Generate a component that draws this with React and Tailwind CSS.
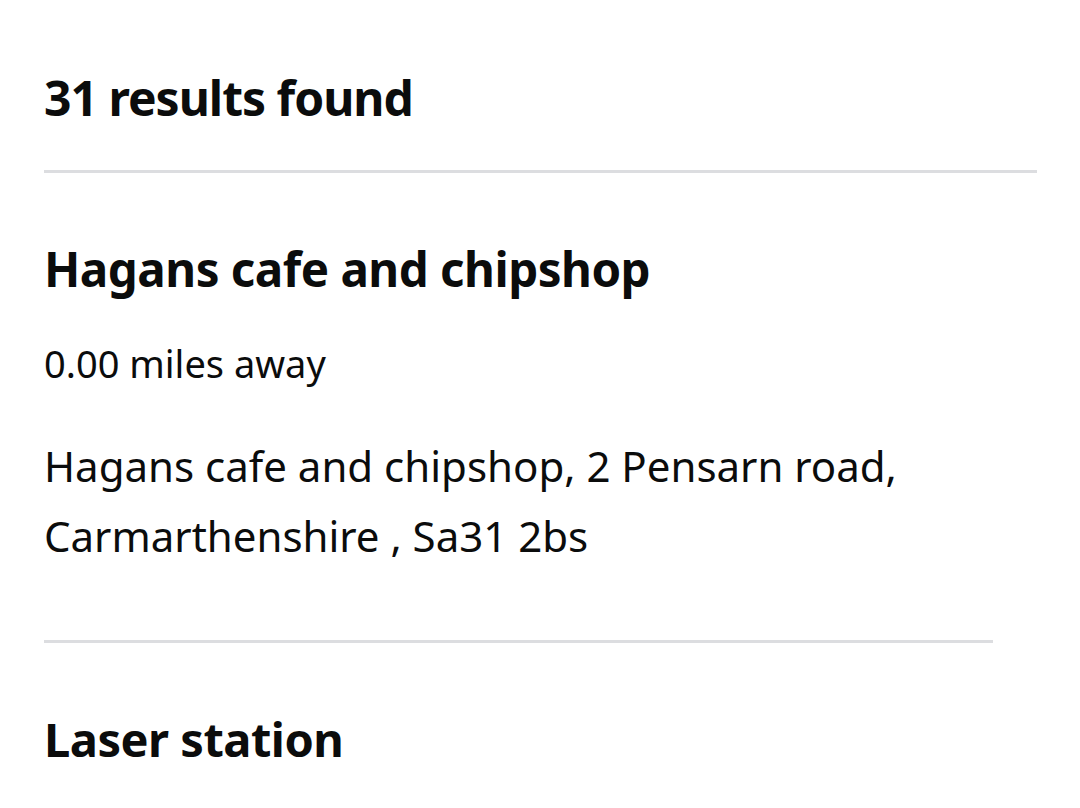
export default function App() {
  const font = { fontFamily: '"Noto Sans", Lato, sans-serif' };
  return (
    <div className="min-h-[808px] bg-white text-[#0b0c0c] overflow-hidden" style={font}>
      <div className="pl-[44px] pr-[44px] pt-[64px]">
        <h1 className="text-[48px] font-bold leading-[68px] tracking-[-1px]">31 results found</h1>
        <div className="mt-[38px] h-[3px] bg-[#dcdde0] w-[993px]"></div>

        <h2 className="mt-[66px] text-[47.5px] font-bold leading-[60px] tracking-[-0.5px]">Hagans cafe and chipshop</h2>
        <p className="mt-[42px] text-[38px] leading-[44px]">0.00 miles away</p>
        <p className="mt-[46px] text-[42px] leading-[70px] w-[960px]">
          Hagans cafe and chipshop, 2 Pensarn road,
          <br />
          Carmarthenshire , Sa31 2bs
        </p>
        <div className="mt-[69px] h-[3px] bg-[#dcdde0] w-[949px]"></div>

        <h2 className="mt-[66px] text-[47px] font-bold leading-[60px] tracking-[-0.5px]">Laser station</h2>
      </div>
    </div>
  );
}
